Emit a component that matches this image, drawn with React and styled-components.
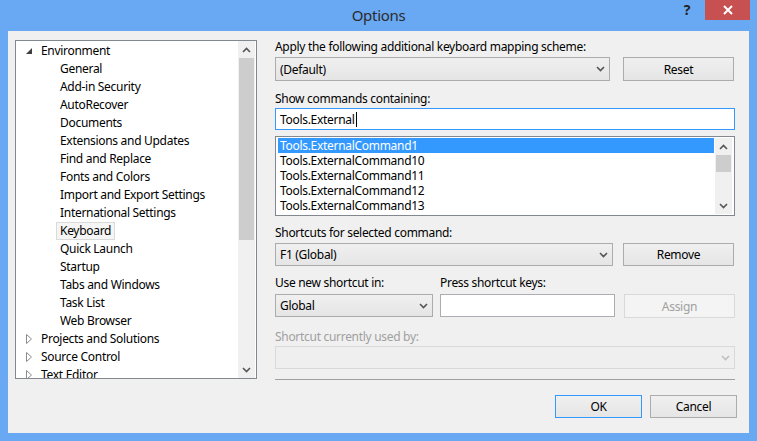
import React from 'react'
import styled, { createGlobalStyle } from 'styled-components'

const GlobalStyle = createGlobalStyle`
  html, body { margin: 0; padding: 0; background: #6aa9f2; }
  body {
    font-family: "Noto Sans", "Open Sans", sans-serif;
    font-size: 12px;
    letter-spacing: -0.3px;
    color: #000;
  }
  * { box-sizing: border-box; }
`

const Frame = styled.div`
  width: 757px;
  height: 441px;
  background: #69a9f3;
  display: flex;
  flex-direction: column;
  padding: 0 8px 8px 8px;
`

const TitleBar = styled.div`
  height: 31px;
  display: flex;
  align-items: flex-start;
`

const Title = styled.div`
  flex: 1;
  text-align: center;
  font-size: 15px;
  line-height: 30px;
  color: #2b2b2b;
  padding-left: 77px;
`

const Help = styled.div`
  width: 30px;
  line-height: 20px;
  text-align: center;
  font-weight: bold;
  font-size: 14px;
  color: #222;
  margin-right: 3px;
`

const Close = styled.div`
  width: 45px;
  height: 20px;
  background: #c75050;
  display: flex;
  align-items: center;
  justify-content: center;
  margin-right: -1px;
`

const Client = styled.div`
  flex: 1;
  background: #f0f0f0;
  display: flex;
  align-items: flex-start;
  padding: 9px 0 0 7px;
  gap: 18px;
`

const Tree = styled.div`
  width: 242px;
  height: 339px;
  border: 1px solid #828790;
  background: #fff;
  display: flex;
  overflow: hidden;
`

const TreeRows = styled.div`
  flex: 1;
  padding-top: 1px;
  overflow: hidden;
`

const TreeRow = styled.div`
  height: 18px;
  display: flex;
  align-items: center;
  padding-left: ${p => (p.$child ? 40 : 10)}px;
  white-space: nowrap;
`

const Twisty = styled.span`
  width: 11px;
  display: flex;
  align-items: center;
`

const TreeText = styled.span`
  line-height: 16px;
  padding: 0 3px;
  border: 1px solid ${p => (p.$selected ? '#dadada' : 'transparent')};
  background: ${p => (p.$selected ? '#f5f5f5' : 'transparent')};
`

const ScrollBar = styled.div`
  width: 17px;
  margin-right: 1px;
  background: #f0f0f0;
  display: flex;
  flex-direction: column;
`

const ScrollArrow = styled.div`
  height: 17px;
  display: flex;
  align-items: center;
  justify-content: center;
  flex-shrink: 0;
`

const ScrollTrack = styled.div`
  flex: 1;
  display: flex;
  flex-direction: column;
`

const Thumb = styled.div`
  height: ${p => p.$h}px;
  background: #cdcdcd;
  margin: 0 1px;
`

const Panel = styled.div`
  width: 460px;
  display: flex;
  flex-direction: column;
`

const Label = styled.div`
  line-height: 13px;
  height: 13px;
  white-space: nowrap;
  width: ${p => (p.$w ? p.$w + 'px' : 'auto')};
  margin-top: ${p => p.$mt || 0}px;
  color: ${p => (p.$disabled ? '#a0a0a0' : '#000')};
`

const Row = styled.div`
  display: flex;
  gap: ${p => p.$gap || 0}px;
  margin-top: ${p => p.$mt || 0}px;
`

const Combo = styled.div`
  width: ${p => (p.$w ? p.$w + 'px' : 'auto')};
  flex: ${p => (p.$w ? 'none' : 1)};
  height: ${p => p.$h || 23}px;
  border: 1px solid ${p => (p.$disabled ? '#d9d9d9' : '#acacac')};
  background: ${p => (p.$disabled ? '#efefef' : 'linear-gradient(#f0f0f0, #e5e5e5)')};
  display: flex;
  align-items: center;
  padding-left: 4px;
  color: ${p => (p.$disabled ? '#a0a0a0' : '#000')};
`

const ComboText = styled.span`
  flex: 1;
`

const Chevron = styled.span`
  width: 18px;
  display: flex;
  justify-content: center;
`

const Button = styled.div`
  width: ${p => p.$w || 111}px;
  height: ${p => p.$h || 24}px;
  margin-left: ${p => p.$ml || 0}px;
  margin-right: ${p => p.$mr || 0}px;
  border: 1px solid ${p => (p.$default ? '#3399ff' : p.$disabled ? '#d9d9d9' : '#acacac')};
  background: ${p => (p.$disabled ? '#f4f4f4' : 'linear-gradient(#f0f0f0, #e5e5e5)')};
  color: ${p => (p.$disabled ? '#a0a0a0' : '#000')};
  display: flex;
  align-items: center;
  justify-content: center;
  flex-shrink: 0;
`

const TextBox = styled.div`
  width: ${p => (p.$w ? p.$w + 'px' : 'auto')};
  height: ${p => p.$h || 23}px;
  margin-top: ${p => p.$mt || 0}px;
  margin-left: ${p => p.$ml || 0}px;
  flex-shrink: 0;
  border: 1px solid ${p => (p.$focus ? '#3399ff' : '#abadb3')};
  background: #fff;
  display: flex;
  align-items: center;
  padding-left: 4px;
`

const Caret = styled.span`
  width: 1px;
  height: 15px;
  background: #000;
  margin-left: 1px;
`

const ListBox = styled.div`
  height: 80px;
  margin-top: 6px;
  border: 1px solid #828790;
  background: #fff;
  display: flex;
  padding: 1px 1px 1px 2px;
`

const ListRows = styled.div`
  flex: 1;
  overflow: hidden;
`

const ListItem = styled.div`
  height: 15px;
  line-height: 15px;
  padding-left: 2px;
  background: ${p => (p.$selected ? '#3399ff' : 'transparent')};
  color: ${p => (p.$selected ? '#fff' : '#000')};
  margin-right: 1px;
`

const Separator = styled.div`
  height: 1px;
  background: #a0a0a0;
  margin-top: 10px;
`

const Footer = styled.div`
  display: flex;
  justify-content: flex-end;
  gap: 8px;
  margin-top: 15px;
  margin-right: -2px;
`

const ChevDown = ({ color = '#555' }) => (
  <svg width="9" height="6" viewBox="0 0 9 6">
    <path d="M1 1 L4.5 4.5 L8 1" fill="none" stroke={color} strokeWidth="1.6" />
  </svg>
)

const ChevUp = ({ color = '#555' }) => (
  <svg width="9" height="6" viewBox="0 0 9 6">
    <path d="M1 5 L4.5 1.5 L8 5" fill="none" stroke={color} strokeWidth="1.6" />
  </svg>
)

const Expanded = () => (
  <svg width="6" height="6" viewBox="0 0 6 6">
    <path d="M6 0 L6 6 L0 6 Z" fill="#404040" />
  </svg>
)

const Collapsed = () => (
  <svg width="6" height="10" viewBox="0 0 6 10">
    <path d="M0.5 0.5 L5.5 5 L0.5 9.5 Z" fill="none" stroke="#8c8c8c" strokeWidth="1" />
  </svg>
)

const envChildren = [
  'General', 'Add-in Security', 'AutoRecover', 'Documents', 'Extensions and Updates',
  'Find and Replace', 'Fonts and Colors', 'Import and Export Settings', 'International Settings',
  'Keyboard', 'Quick Launch', 'Startup', 'Tabs and Windows', 'Task List', 'Web Browser',
]

const commands = [
  'Tools.ExternalCommand1', 'Tools.ExternalCommand10', 'Tools.ExternalCommand11',
  'Tools.ExternalCommand12', 'Tools.ExternalCommand13',
]

export default function App() {
  return (
    <Frame>
      <GlobalStyle />
      <TitleBar>
        <Title>Options</Title>
        <Help>?</Help>
        <Close>
          <svg width="10" height="10" viewBox="0 0 10 10">
            <path d="M1 1 L9 9 M9 1 L1 9" stroke="#fff" strokeWidth="2" />
          </svg>
        </Close>
      </TitleBar>
      <Client>
        <Tree>
          <TreeRows>
            <TreeRow>
              <Twisty><Expanded /></Twisty>
              <TreeText>Environment</TreeText>
            </TreeRow>
            {envChildren.map(c => (
              <TreeRow key={c} $child>
                <TreeText $selected={c === 'Keyboard'}>{c}</TreeText>
              </TreeRow>
            ))}
            {['Projects and Solutions', 'Source Control', 'Text Editor'].map(c => (
              <TreeRow key={c}>
                <Twisty><Collapsed /></Twisty>
                <TreeText>{c}</TreeText>
              </TreeRow>
            ))}
          </TreeRows>
          <ScrollBar>
            <ScrollArrow><ChevUp /></ScrollArrow>
            <ScrollTrack>
              <Thumb $h={182} />
            </ScrollTrack>
            <ScrollArrow><ChevDown /></ScrollArrow>
          </ScrollBar>
        </Tree>

        <Panel>
          <Label>Apply the following additional keyboard mapping scheme:</Label>
          <Row $gap={13} $mt={4}>
            <Combo $h={24}>
              <ComboText>(Default)</ComboText>
              <Chevron><ChevDown /></Chevron>
            </Combo>
            <Button $mr={1}>Reset</Button>
          </Row>

          <Label $mt={11}>Show commands containing:</Label>
          <TextBox $focus $h={22} $mt={3}>
            Tools.External<Caret />
          </TextBox>

          <ListBox>
            <ListRows>
              {commands.map((c, i) => (
                <ListItem key={c} $selected={i === 0}>{c}</ListItem>
              ))}
            </ListRows>
            <ScrollBar>
              <ScrollArrow><ChevUp /></ScrollArrow>
              <ScrollTrack>
                <Thumb $h={17} />
              </ScrollTrack>
              <ScrollArrow><ChevDown /></ScrollArrow>
            </ScrollBar>
          </ListBox>

          <Label $mt={10}>Shortcuts for selected command:</Label>
          <Row $gap={10} $mt={4}>
            <Combo>
              <ComboText>F1 (Global)</ComboText>
              <Chevron><ChevDown /></Chevron>
            </Combo>
            <Button $h={23} $mr={1}>Remove</Button>
          </Row>

          <Row $mt={10}>
            <Label $w={165}>Use new shortcut in:</Label>
            <Label>Press shortcut keys:</Label>
          </Row>
          <Row $mt={5}>
            <Combo $w={158}>
              <ComboText>Global</ComboText>
              <Chevron><ChevDown /></Chevron>
            </Combo>
            <TextBox $w={175} $ml={7} />
            <Button $disabled $ml={9} $mr={1}>Assign</Button>
          </Row>

          <Label $mt={12} $disabled>Shortcut currently used by:</Label>
          <Row $mt={3}>
            <Combo $disabled>
              <ComboText />
              <Chevron><ChevDown color="#c0c0c0" /></Chevron>
            </Combo>
          </Row>

          <Separator />

          <Footer>
            <Button $default $w={87} $h={23}>OK</Button>
            <Button $w={87} $h={23}>Cancel</Button>
          </Footer>
        </Panel>
      </Client>
    </Frame>
  )
}
